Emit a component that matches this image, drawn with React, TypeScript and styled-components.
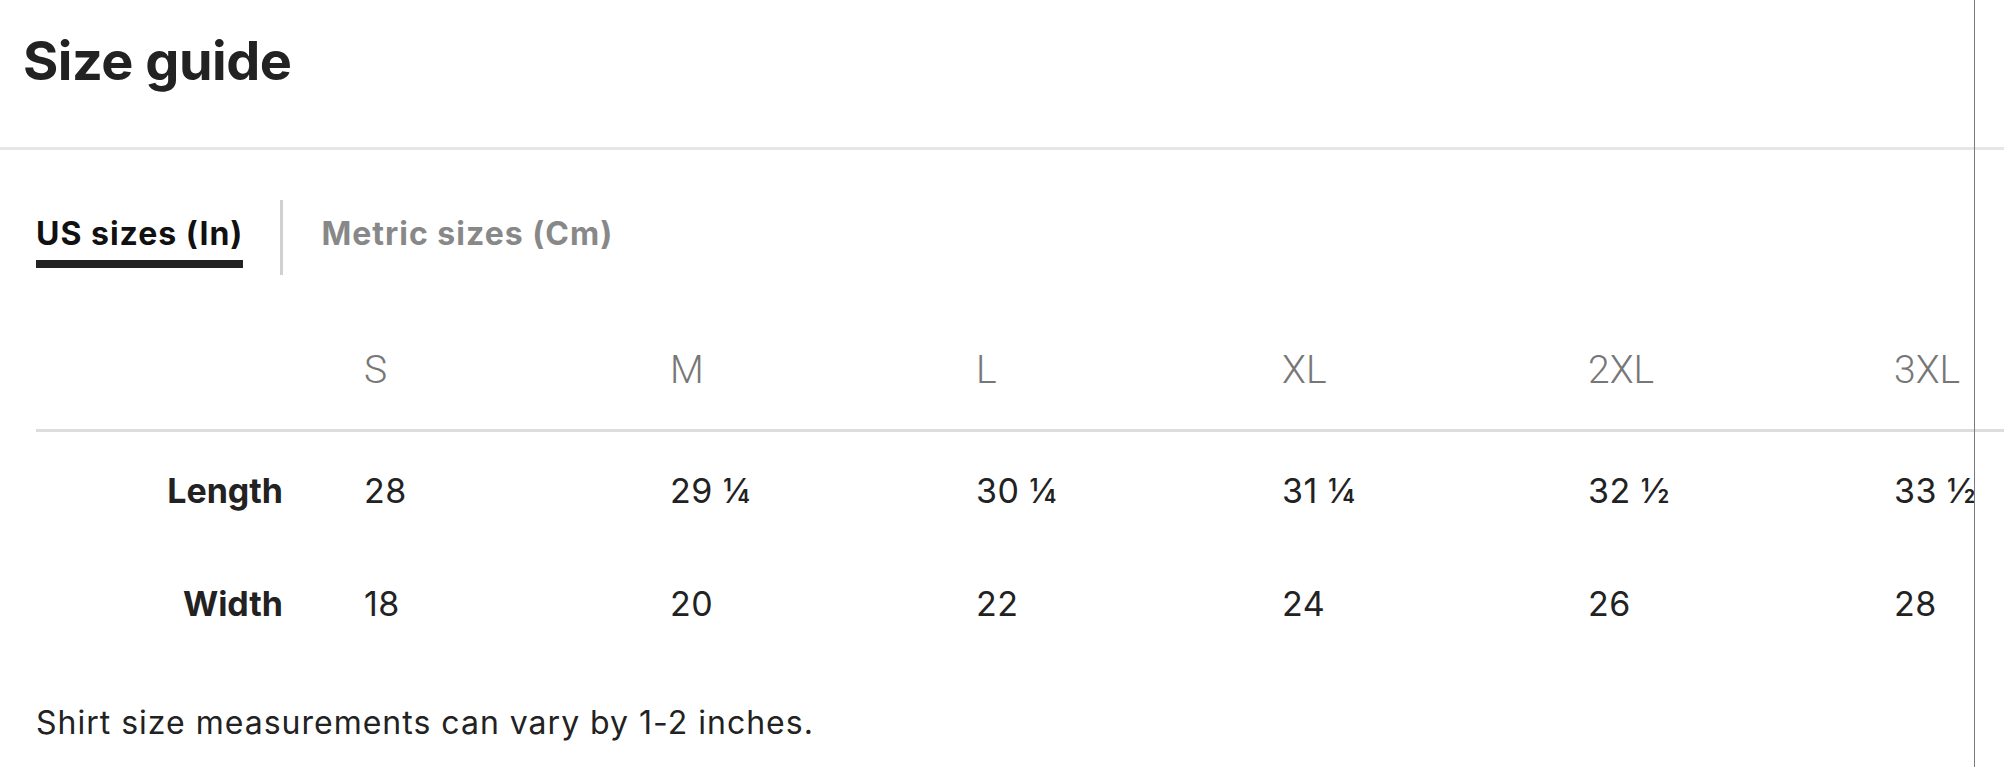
import React from "react";
import styled, { createGlobalStyle } from "styled-components";

const GlobalStyle = createGlobalStyle`
  html, body {
    margin: 0;
    padding: 0;
    background: #ffffff;
    overflow: hidden;
  }
  body {
    font-family: "Inter", "Open Sans", Arial, sans-serif;
    color: #222222;
  }
`;

const Page = styled.div`
  position: relative;
  width: 2004px;
  height: 767px;
  overflow: hidden;
  background: #ffffff;
`;

const EdgeLine = styled.div`
  position: absolute;
  left: 1974px;
  top: 0;
  bottom: 0;
  width: 1px;
  background: #7a7a7a;
`;

const Header = styled.header`
  height: 147px;
  box-sizing: content-box;
  border-bottom: 3px solid #e6e6e6;
  padding-left: 23px;
`;

const Title = styled.h1`
  margin: 0;
  padding-top: 28px;
  font-family: "Inter", sans-serif;
  font-weight: 700;
  font-size: 54px;
  line-height: 66px;
  letter-spacing: -0.5px;
  color: #222222;
`;

const Body = styled.main`
  padding-left: 36px;
`;

const TabRow = styled.div`
  display: flex;
  align-items: flex-start;
  margin-top: 50px;
  height: 75px;
`;

const Tab = styled.button<{ $active?: boolean }>`
  border: none;
  background: none;
  margin: 0;
  padding: 14px 0 6px;
  font-family: "Inter", sans-serif;
  font-weight: 700;
  font-size: 32px;
  line-height: 40px;
  letter-spacing: 1px;
  color: ${(p) => (p.$active ? "#111111" : "#888888")};
  border-bottom: 8px solid ${(p) => (p.$active ? "#222222" : "transparent")};
  cursor: pointer;
`;

const TabDivider = styled.span`
  width: 3px;
  height: 75px;
  background: #d0d0d0;
  margin: 0 38px 0 37px;
`;

const Table = styled.div`
  margin-top: 72px;
`;

const Row = styled.div<{ $head?: boolean }>`
  border-bottom: ${(p) => (p.$head ? "3px solid #dddddd" : "none")};
  padding: ${(p) => (p.$head ? "0 0 36px" : "38px 0 33px")};
`;

const Cells = styled.div`
  width: 1938px;
  overflow-x: clip;
  overflow-y: visible;
  display: grid;
  grid-template-columns: 247px repeat(6, 225px);
  column-gap: 81px;
`;

const HeadCell = styled.div`
  font-family: "Roboto", "Liberation Sans", sans-serif;
  font-weight: 300;
  font-size: 39px;
  line-height: 46px;
  color: #777777;
  white-space: nowrap;
`;

const Label = styled.div`
  text-align: right;
  font-family: "Inter", sans-serif;
  font-weight: 700;
  font-size: 34px;
  line-height: 42px;
  color: #222222;
  white-space: nowrap;
`;

const Value = styled.div`
  font-family: "Inter", sans-serif;
  font-weight: 400;
  font-size: 34px;
  line-height: 42px;
  letter-spacing: 0.5px;
  color: #222222;
  white-space: nowrap;
`;

const Note = styled.p`
  margin: 45px 0 0;
  font-family: "Inter", sans-serif;
  font-weight: 400;
  font-size: 32px;
  line-height: 40px;
  letter-spacing: 1px;
  color: #222222;
`;

const sizes = ["S", "M", "L", "XL", "2XL", "3XL"];
const rows = [
  { label: "Length", values: ["28", "29 ¼", "30 ¼", "31 ¼", "32 ½", "33 ½"] },
  { label: "Width", values: ["18", "20", "22", "24", "26", "28"] },
];

export default function App() {
  return (
    <Page>
      <GlobalStyle />
      <Header>
        <Title>Size guide</Title>
      </Header>
      <Body>
        <TabRow>
          <Tab $active>US sizes (In)</Tab>
          <TabDivider />
          <Tab>Metric sizes (Cm)</Tab>
        </TabRow>
        <Table>
          <Row $head>
            <Cells>
              <HeadCell />
              {sizes.map((s) => (
                <HeadCell key={s}>{s}</HeadCell>
              ))}
            </Cells>
          </Row>
          {rows.map((r) => (
            <Row key={r.label}>
              <Cells>
                <Label>{r.label}</Label>
                {r.values.map((v, i) => (
                  <Value key={i}>{v}</Value>
                ))}
              </Cells>
            </Row>
          ))}
        </Table>
        <Note>Shirt size measurements can vary by 1-2 inches.</Note>
      </Body>
      <EdgeLine />
    </Page>
  );
}
